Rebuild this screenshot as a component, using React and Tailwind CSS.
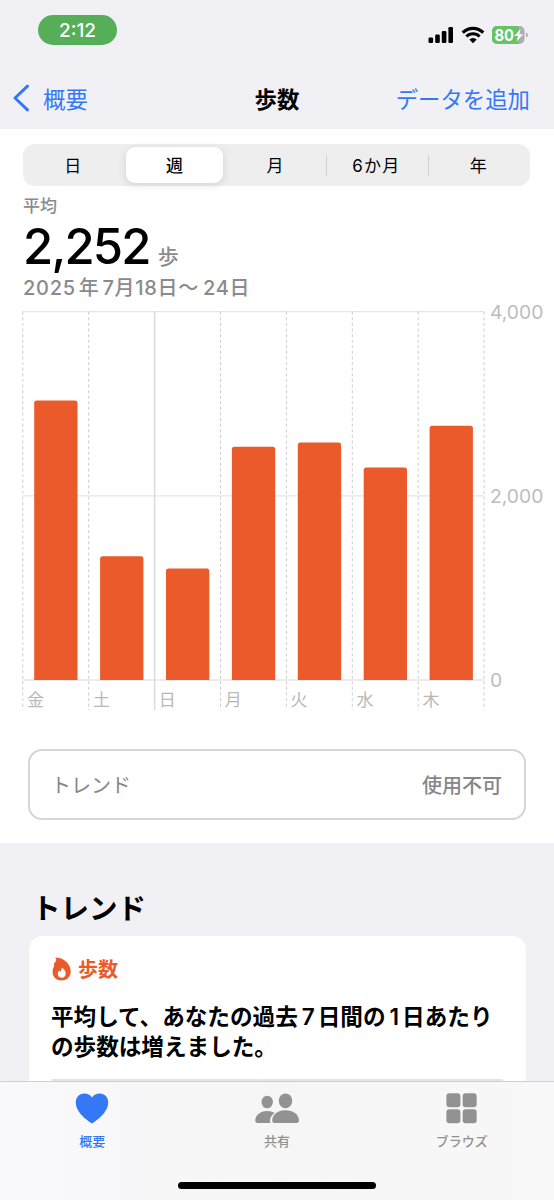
const RANGES = ["日", "週", "月", "6か月", "年"];

const DAYS = [
  { label: "金", steps: 3035 },
  { label: "土", steps: 1345 },
  { label: "日", steps: 1210 },
  { label: "月", steps: 2532 },
  { label: "火", steps: 2580 },
  { label: "水", steps: 2307 },
  { label: "木", steps: 2760 },
];

const MAX_STEPS = 4000;
const PLOT_TOP = 11.7;
const PLOT_HEIGHT = 368.3;
const PLOT_LEFT = 22.8;
const COL = 65.9;

function StatusBar() {
  return (
    <div className="flex h-[68px] items-start justify-between pl-[38px] pr-[26px] pt-[15px]">
      <div className="flex h-[30px] w-[79px] items-center justify-center rounded-full bg-[#56ae58] pt-[2px] font-['Inter'] text-[19px] font-medium text-white">
        2:12
      </div>
      <div className="mt-[11px] flex h-[18px] items-center">
        <svg width="26" height="18" viewBox="0 0 26 18">
          <rect x="1.500" y="11.500" width="4.600" height="5.500" rx="1.2" />
          <rect x="8.200" y="8.500" width="4.600" height="8.500" rx="1.2" />
          <rect x="14.800" y="5" width="4.600" height="12" rx="1.2" />
          <rect x="21.400" y="1" width="4.600" height="16" rx="1.2" />
        </svg>
        <svg className="ml-[8px]" width="24" height="18" viewBox="0 0 24 18">
          <path d="M1.7 6.6A14.6 14.6 0 0 1 22.3 6.6" fill="none" stroke="#000" strokeWidth="3.2" />
          <path d="M5.4 10.5A9.4 9.4 0 0 1 18.6 10.5" fill="none" stroke="#000" strokeWidth="3" />
          <path d="M12 17.3L8.3 13.5A5.3 5.3 0 0 1 15.7 13.5Z" />
        </svg>
        <svg className="ml-[7px]" width="36" height="18" viewBox="0 0 36 18">
          <clipPath id="battery">
            <rect width="32.5" height="18" rx="5" />
          </clipPath>
          <g clipPath="url(#battery)">
            <rect width="33" height="18" fill="#aeaeb2" />
            <rect width="26.500" height="18" fill="#65c466" />
          </g>
          <path d="M34 6.5Q36 7.2 36 9T34 11.5Z" fill="#aeaeb2" />
          <text x="2.500" y="14.8" fontSize="16" fontWeight="700" fill="#fff" fontFamily="Inter" textLength="19.500" lengthAdjust="spacingAndGlyphs">
            80
          </text>
          <path d="M28.5 3L22.300 10H26L24.5 15.8L31 8.2H27.3Z" fill="#fff" />
        </svg>
      </div>
    </div>
  );
}

function NavBar() {
  return (
    <div className="grid h-[61px] grid-cols-3 items-center pb-px pl-[12px] pr-[24px] text-[22.4px] leading-none">
      <div className="flex items-center text-[#3478f6]">
        <svg width="18" height="28" viewBox="0 0 18 28" fill="none" stroke="currentColor" strokeWidth="3" strokeLinecap="round" strokeLinejoin="round">
          <path d="M15.5 2.2L3 14L15.5 25.8" />
        </svg>
        <span className="ml-[13px]">概要</span>
      </div>
      <div className="pl-[12px] text-center font-bold text-black">歩数</div>
      <div className="whitespace-nowrap text-right text-[#3478f6]">データを追加</div>
    </div>
  );
}

function RangePicker() {
  return (
    <div className="ml-[23px] mr-[24px] mt-[15px] grid h-[42px] grid-cols-5 rounded-[12px] bg-[#eeeeef] text-[17px] leading-none">
      {RANGES.map((range, i) => (
        <div key={range} className="flex items-center">
          {i === 1 ? (
            <div className="ml-[2px] mr-[3px] flex h-[36px] flex-1 items-center justify-center rounded-[9px] bg-white pb-px font-medium shadow-[0_2px_8px_rgba(0,0,0,0.12)]">
              {range}
            </div>
          ) : (
            <div
              className={`flex flex-1 items-center justify-center pr-[2px] pt-[2px] font-['Inter','Noto_Sans_CJK_JP',sans-serif] ${
                range.length > 1 ? "tracking-[1.2px]" : ""
              }`}
            >
              {range}
            </div>
          )}
          {(i === 2 || i === 3) && <div className="h-[21px] w-px bg-[#d2d2d6]" />}
        </div>
      ))}
    </div>
  );
}

function StepsChart() {
  const bottom = PLOT_TOP + PLOT_HEIGHT;
  const right = PLOT_LEFT + COL * 7;

  return (
    <svg className="block" width="554" height="412" viewBox="0 0 554 412">
      {[0, 2000, 4000].map((value) => {
        const y = bottom - (value / MAX_STEPS) * PLOT_HEIGHT;
        return (
          <g key={value}>
            <line x1={PLOT_LEFT} x2={right} y1={y} y2={y} stroke="#e6e6e9" strokeWidth="1.3" />
            <text x="490" y={y + 7} fontSize="19.3" fontFamily="Inter" fill="#bcbcc0">
              {value.toLocaleString("en-US")}
            </text>
          </g>
        );
      })}
      {[0, 1, 2, 3, 4, 5, 6, 7].map((i) => (
        <line
          key={i}
          x1={PLOT_LEFT + COL * i}
          x2={PLOT_LEFT + COL * i}
          y1={PLOT_TOP}
          y2="410"
          stroke={i === 2 ? "#d9d9de" : "#cdcdd1"}
          strokeWidth={i === 2 ? 1.5 : 1}
          strokeDasharray={i === 2 ? undefined : "3 2.6"}
        />
      ))}
      {DAYS.map(({ label, steps }, i) => {
        const x = PLOT_LEFT + COL * i;
        const h = (steps / MAX_STEPS) * PLOT_HEIGHT;
        return (
          <g key={label}>
            <path
              transform={`translate(${x + 11.4} ${bottom - h})`}
              d={`M0 ${h}V2.500Q0 0 2.500 0H40.800Q43.300 0 43.300 2.500V${h}Z`}
              fill="#eb5a2a"
            />
            <text x={x + 4.2} y="405.500" fontSize="17" fill="#b9b9bd">
              {label}
            </text>
          </g>
        );
      })}
    </svg>
  );
}

function FlameIcon() {
  return (
    <svg width="20" height="24" viewBox="0 0 20 24" fill="currentColor">
      <path
        fillRule="evenodd"
        d="M3.300 0.400C11 .3 18.700 6.500 18.700 14.300C18.700 19.800 15 23.500 9.800 23.500C4.600 23.500 .6 20 .6 15C.6 12 1.200 10.500 2.300 9C1.500 7.500 2 6 3.200 5C4.600 4 4.600 2.300 3.300 .4ZM9.700 10.600C10.200 13 8.600 13.700 8.100 15C7.600 14.600 7.300 14 7.300 13.500C6.300 14.500 5.800 15.700 5.800 17C5.800 19.300 7.500 20.700 9.800 20.700C12.100 20.700 13.700 19.200 13.700 16.800C13.700 14.300 12.200 12 9.700 10.600Z"
      />
    </svg>
  );
}

function TabBar() {
  return (
    <div className="absolute inset-x-0 bottom-0 h-[119px] border-t border-[#cfcfd1] bg-linear-to-r from-[#f9f9fc] via-[#f6f6f6] to-[#f9f8f9] text-[13px] font-medium leading-none text-[#929292]">
      <div className="grid grid-cols-3 pt-[10px]">
        <div className="flex flex-col items-center text-[#3478f6]">
          <svg width="34" height="32" viewBox="0 0 34 32" fill="currentColor">
            <path d="M17 31.500C13 29 .8 20.500 .8 10.500C.8 5 4.500 1.500 9 1.500C12.500 1.500 15.500 3 17 5.500C18.500 3 21.500 1.500 25 1.500C29.500 1.500 33.200 5 33.200 10.500C33.200 20.500 21 29 17 31.500Z" />
          </svg>
          <span className="mt-[10px]">概要</span>
        </div>
        <div className="flex flex-col items-center">
          <svg width="46" height="32" viewBox="0 0 46 32" fill="currentColor">
            <ellipse cx="13.200" cy="10" rx="5.700" ry="6.300" />
            <path d="M3.500 31Q1.200 31 1.200 28.500C1.200 23.500 6 19 13 19Q17.500 19 20.500 20.800Q16 24.500 16 29Q16 30.300 16.800 31Z" />
            <ellipse cx="31.500" cy="8.800" rx="6.700" ry="7.400" />
            <path d="M20.500 31Q18.200 31 18.200 28.500C18.200 23 23.500 18.300 31.500 18.300S45 23 45 28.500Q45 31 42.700 31Z" />
          </svg>
          <span className="mt-[10px]">共有</span>
        </div>
        <div className="flex flex-col items-center">
          <svg width="32" height="32" viewBox="0 0 32 32" fill="currentColor">
            <rect x="0.400" y="1.300" width="14" height="14" rx="3" />
            <rect x="16.700" y="1.300" width="14" height="14" rx="3" />
            <rect x="0.400" y="17.300" width="14" height="14" rx="3" />
            <rect x="16.700" y="17.300" width="14" height="14" rx="3" />
          </svg>
          <span className="mt-[10px]">ブラウズ</span>
        </div>
      </div>
      <div className="mx-auto mt-[35px] h-[7px] w-[198px] rounded-full bg-black" />
    </div>
  );
}

export default function App() {
  return (
    <div className="relative h-[1200px] w-[554px] overflow-hidden bg-[#f0f0f5] font-['Noto_Sans_CJK_JP',sans-serif] text-black">
      <StatusBar />
      <NavBar />

      <main className="flex h-[714px] flex-col bg-white">
        <RangePicker />
        <div className="px-[23px] text-[#8a8a8e]">
          <div className="mt-[9px] text-[17px] font-medium leading-[20px]">平均</div>
          <div className="flex h-[61px] items-baseline">
            <span className="font-['Inter'] text-[49px] font-medium leading-[63px] tracking-[-1.8px] text-black">2,252</span>
            <span className="ml-[8px] text-[21px] font-medium leading-none">歩</span>
          </div>
          <div className="h-[24px] whitespace-nowrap font-['Inter','Noto_Sans_CJK_JP',sans-serif] text-[20px] font-medium leading-[24px] tracking-[0.7px]">
            2025
            <span className="ml-[3px] mr-[3px]">年</span>
            7月18日<span className="mr-[4px]">〜</span>24日
          </div>
        </div>
        <StepsChart />
        <div className="mx-[28px] mt-[37px] flex h-[71px] items-center justify-between rounded-[14px] border-2 border-[#d6d6da] pl-[21px] pr-[22px] text-[20px] leading-none text-[#86868a]">
          <span>トレンド</span>
          <span className="font-medium">使用不可</span>
        </div>
      </main>

      <section className="pl-[29px] pr-[28px]">
        <h2 className="pl-[3px] pt-[48px] text-[28.5px] font-bold leading-[32px]">トレンド</h2>
        <div className="mt-[13px] h-[300px] rounded-[14px] bg-white px-[23px] pt-[20px]">
          <div className="flex h-[26px] items-center gap-[6px] text-[20px] font-bold leading-none text-[#eb5a2a]">
            <FlameIcon />
            <span>歩数</span>
          </div>
          <p className="-ml-px mt-[19px] whitespace-nowrap text-[22.6px] font-bold leading-[29px]">
            平均して、あなたの過去
            <span className="ml-[4px] mr-[3px] font-['Inter'] font-semibold">7</span>
            日間の
            <span className="ml-[4px] mr-[3px] font-['Inter'] font-semibold">1</span>
            日あたり
            <br />
            の歩数は増えました。
          </p>
          <div className="mt-[19px] h-[2px] bg-[#e4e4e4]" />
        </div>
      </section>

      <TabBar />
    </div>
  );
}
